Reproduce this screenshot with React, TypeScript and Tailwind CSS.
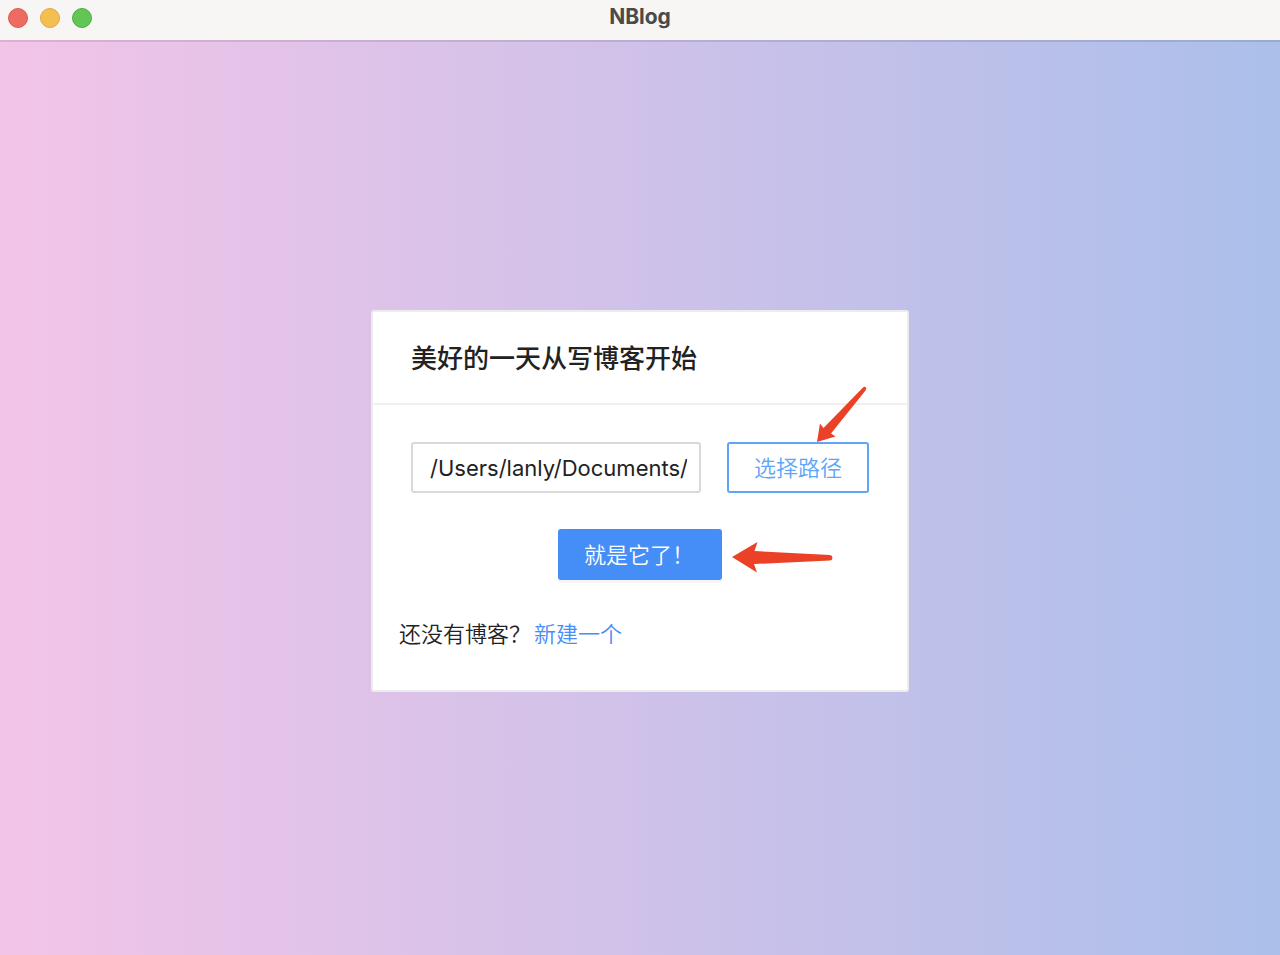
import { useState } from "react";

function TitleBar() {
  return (
    <header className="grid h-[42px] grid-cols-[1fr_auto_1fr] items-start border-b-2 border-black/10 bg-[#f7f6f4] bg-clip-padding px-2">
      <div className="flex gap-3 pt-2">
        <button type="button" aria-label="Close" className="size-5 rounded-full border border-[#d95d52] bg-[#ed6b60]" />
        <button type="button" aria-label="Minimize" className="size-5 rounded-full border border-[#dba844] bg-[#f5bf50]" />
        <button type="button" aria-label="Zoom" className="size-5 rounded-full border border-[#52ab42] bg-[#62c655]" />
      </div>
      <h1 className="pt-1 text-[21px] leading-[26px] font-bold text-[#4b4a49]">NBlog</h1>
    </header>
  );
}

export default function App() {
  const [path, setPath] = useState("/Users/lanly/Documents/");

  return (
    <div className="flex min-h-screen flex-col bg-[linear-gradient(90deg,#f3c4e8_0%,#abbfea_100%)] font-[Inter,'Noto_Sans_CJK_SC',sans-serif] text-[22px] text-[#222222]">
      <TitleBar />
      <main className="flex flex-1 items-center justify-center pt-1">
        <section className="w-full max-w-[538px] rounded-[3px] border-2 border-[#ececee] bg-white">
          <div className="border-b-2 border-[#f0f0f0] px-[38px] pt-7 pb-[26px]">
            <h2 className="text-[26px] leading-[37px] font-medium">美好的一天从写博客开始</h2>
          </div>
          <form className="px-[38px] pt-[37px] pb-[38px]" onSubmit={(event) => event.preventDefault()}>
            <div className="flex gap-[26px]">
              <input
                aria-label="博客路径"
                value={path}
                onChange={(event) => setPath(event.target.value)}
                className="h-[51px] min-w-0 flex-1 rounded-[3px] border-2 border-[#d9d9d9] bg-white pt-[2px] pr-3 pl-[17px]"
              />
              <div className="relative">
                <button type="button" className="h-[51px] w-[142px] rounded-[3px] border-2 border-[#5ca5f8] bg-white pt-[2px] font-[350] text-[#5ca5f8]">
                  选择路径
                </button>
                <svg aria-hidden="true" viewBox="0 0 50 56" className="absolute bottom-[51px] left-[90px] h-14 w-[50px]" fill="#ea4127">
                  <path d="M0 56L3 37.5L6.5 42L45.5 2Q47.5 0 49 1.5Q49.8 2.5 48.5 4.5L14 47.5L18.5 50.5Z" />
                </svg>
              </div>
            </div>
            <div className="mt-9 flex justify-center">
              <div className="relative">
                <button type="submit" className="h-[51px] w-[164px] rounded-[3px] bg-[#458df7] px-[26px] pt-[2px] text-left font-[350] text-white shadow-[0_3px_0_rgba(0,0,0,0.04)]">
                  就是它了！
                </button>
                <svg aria-hidden="true" viewBox="0 0 101 32" className="absolute top-3 left-[174px] h-8 w-[101px]" fill="#ea4127">
                  <path d="M0 16L25.5 1L22.5 10L98 14Q100.5 14.5 100.5 17Q100.5 19 98 19.5L22 23L25 31.5Z" />
                </svg>
              </div>
            </div>
            <p className="-ml-3 mt-9 flex gap-[3px] pt-px leading-[35px] font-[350]">
              <span>还没有博客？</span>
              <a href="#new" className="text-[#458df7]">新建一个</a>
            </p>
          </form>
        </section>
      </main>
    </div>
  );
}
